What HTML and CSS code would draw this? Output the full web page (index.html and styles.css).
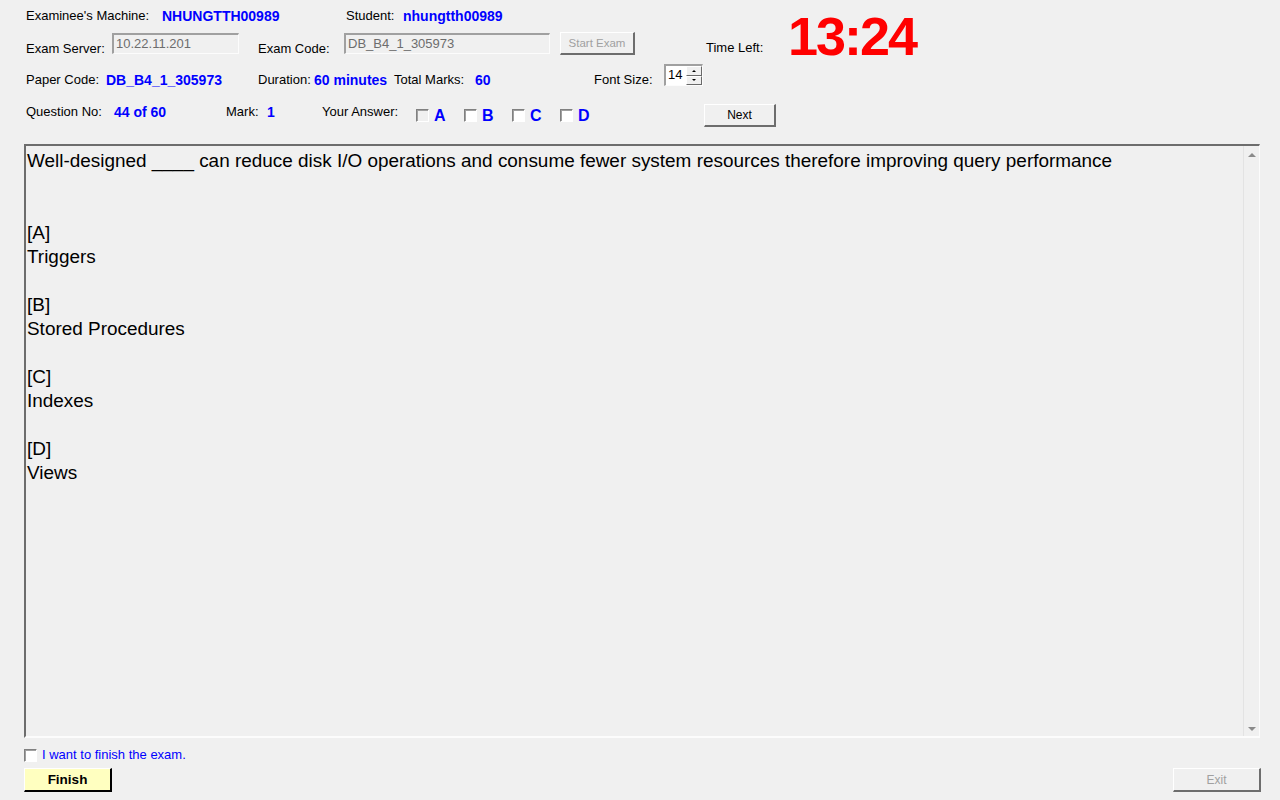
FILE: index.html
```html
<!DOCTYPE html>
<html>
<head>
<meta charset="utf-8">
<link rel="stylesheet" href="styles.css">
<title>Exam</title>
</head>
<body>
<div class="app">
  <div class="band">
    <div class="leftcol">
      <div class="row r1">
        <span class="lbl w136">Examinee's Machine:</span>
        <span class="val w184">NHUNGTTH00989</span>
        <span class="lbl w57">Student:</span>
        <span class="val">nhungtth00989</span>
      </div>
      <div class="row r2">
        <span class="lbl w86 low">Exam Server:</span>
        <span class="tbox w127">10.22.11.201</span>
        <span class="lbl w86 low ml19">Exam Code:</span>
        <span class="tbox w206">DB_B4_1_305973</span>
        <span class="btn btn-start">Start Exam</span>
      </div>
    </div>
    <span class="lbl timelbl">Time Left:</span>
    <span class="timer">13:24</span>
  </div>

  <div class="row r3">
    <span class="lbl w80 low">Paper Code:</span>
    <span class="val w152 low">DB_B4_1_305973</span>
    <span class="lbl w56 low">Duration:</span>
    <span class="val w80 low">60 minutes</span>
    <span class="lbl w81 low">Total Marks:</span>
    <span class="val w119 low">60</span>
    <span class="lbl w70 low">Font Size:</span>
    <span class="spin">
      <span class="spin-val">14</span>
      <span class="spin-btns">
        <span class="spin-b"><span class="tri-up sm"></span></span>
        <span class="spin-b"><span class="tri-down sm"></span></span>
      </span>
    </span>
  </div>

  <div class="row r4">
    <span class="lbl w88">Question No:</span>
    <span class="val w112">44 of 60</span>
    <span class="lbl w41">Mark:</span>
    <span class="val w55">1</span>
    <span class="lbl w94">Your Answer:</span>
    <span class="opt"><span class="cb cb-dis"></span><span class="optl">A</span></span>
    <span class="opt"><span class="cb"></span><span class="optl">B</span></span>
    <span class="opt"><span class="cb"></span><span class="optl">C</span></span>
    <span class="opt last"><span class="cb"></span><span class="optl">D</span></span>
    <span class="btn btn-next">Next</span>
  </div>

  <div class="qbox">
    <div class="qtext">
      <div>Well-designed ____ can reduce disk I/O operations and consume fewer system resources therefore improving query performance</div>
      <div>&nbsp;</div>
      <div>&nbsp;</div>
      <div>[A]</div>
      <div>Triggers</div>
      <div>&nbsp;</div>
      <div>[B]</div>
      <div>Stored Procedures</div>
      <div>&nbsp;</div>
      <div>[C]</div>
      <div>Indexes</div>
      <div>&nbsp;</div>
      <div>[D]</div>
      <div>Views</div>
    </div>
    <div class="vscroll">
      <span class="tri-up"></span>
      <span class="tri-down"></span>
    </div>
  </div>

  <div class="finish-row">
    <span class="cb"></span>
    <span class="finish-lbl">I want to finish the exam.</span>
  </div>
  <div class="footer">
    <span class="btn btn-finish">Finish</span>
    <span class="btn btn-exit">Exit</span>
  </div>
</div>
</body>
</html>
```

FILE: styles.css
```css
html, body {
  margin: 0;
  padding: 0;
  background: #f0f0f0;
}
body {
  font-family: "Liberation Sans", Arial, sans-serif;
  font-size: 13px;
  color: #000;
  width: 1280px;
  height: 800px;
  overflow: hidden;
}
.app {
  display: flex;
  flex-direction: column;
}
.band {
  display: flex;
  align-items: flex-start;
  padding-left: 26px;
  height: 64px;
}
.leftcol {
  width: 680px;
  display: flex;
  flex-direction: column;
}
.row {
  display: flex;
  white-space: nowrap;
}
.r1 {
  margin-top: 9px;
  height: 14px;
  line-height: 14px;
  align-items: center;
}
.r2 {
  margin-top: 10px;
  height: 22px;
  align-items: flex-end;
}
.lbl {
  line-height: 14px;
}
.val {
  color: #0000ff;
  font-weight: bold;
  font-size: 14px;
  line-height: 14px;
}
.low {
  margin-bottom: -1px;
}
.ml19 { margin-left: 19px; }
.w41 { width: 41px; }
.w55 { width: 55px; }
.w56 { width: 56px; }
.w57 { width: 57px; }
.w70 { width: 70px; }
.w80 { width: 80px; }
.w81 { width: 81px; }
.w86 { width: 86px; }
.w88 { width: 88px; }
.w94 { width: 94px; }
.w112 { width: 112px; }
.w119 { width: 119px; }
.w127 { width: 127px; }
.w136 { width: 136px; }
.w152 { width: 152px; }
.w184 { width: 184px; }
.w206 { width: 206px; }

.tbox {
  box-sizing: border-box;
  height: 21px;
  margin-bottom: 1px;
  border-top: 2px solid #a0a0a0;
  border-left: 2px solid #a0a0a0;
  border-right: 1px solid #fcfcfc;
  border-bottom: 1px solid #fcfcfc;
  background: #f0f0f0;
  color: #6d6d6d;
  padding: 1px 2px;
  line-height: 15px;
}
.btn {
  box-sizing: border-box;
  display: flex;
  align-items: center;
  justify-content: center;
  border-top: 1px solid #fff;
  border-left: 1px solid #fff;
  border-right: 2px solid #6d6d6d;
  border-bottom: 2px solid #6d6d6d;
  background: #f0f0f0;
  font-size: 12px;
}
.btn-start {
  margin-left: 10px;
  width: 75px;
  height: 23px;
  color: #a0a0a0;
  font-size: 11.5px;
}
.timelbl {
  margin-top: 41px;
  width: 82px;
}
.timer {
  margin-top: 9px;
  font-size: 54px;
  line-height: 54px;
  font-weight: bold;
  color: #ff0000;
  letter-spacing: -2px;
}

.r3 {
  padding-left: 26px;
  height: 22px;
  align-items: flex-end;
}
.spin {
  box-sizing: border-box;
  width: 39px;
  height: 22px;
  margin-bottom: 0;
  display: flex;
  border-top: 2px solid #a0a0a0;
  border-left: 2px solid #a0a0a0;
  border-right: 1px solid #fcfcfc;
  border-bottom: 1px solid #fcfcfc;
  background: #fff;
}
.spin-val {
  flex: 1;
  font-size: 13px;
  line-height: 18px;
  padding-left: 2px;
}
.spin-btns {
  display: flex;
  flex-direction: column;
  width: 16px;
}
.spin-b {
  flex: 1;
  display: flex;
  align-items: center;
  justify-content: center;
  background: #f0f0f0;
  border-top: 1px solid #fff;
  border-left: 1px solid #fff;
  border-right: 1px solid #696969;
  border-bottom: 1px solid #696969;
}

.r4 {
  padding-left: 26px;
  margin-top: 18px;
  height: 23px;
  align-items: center;
}
.r4 .lbl, .r4 .val {
  margin-top: -7px;
}
.opt {
  display: flex;
  align-items: center;
  width: 48px;
  margin-top: -1px;
}
.opt.last {
  width: 144px;
}
.cb {
  box-sizing: border-box;
  display: inline-block;
  width: 13px;
  height: 13px;
  border-top: 1px solid #808080;
  border-left: 1px solid #808080;
  border-right: 1px solid #fff;
  border-bottom: 1px solid #fff;
  box-shadow: inset 1px 1px 0 #a0a0a0;
  background: #fff;
}
.cb-dis {
  background: #f0f0f0;
}
.optl {
  margin-left: 5px;
  color: #0000ff;
  font-weight: bold;
  font-size: 16px;
  line-height: 18px;
  margin-top: 2px;
}
.btn-next {
  width: 72px;
  height: 23px;
}

.qbox {
  box-sizing: border-box;
  margin-top: 17px;
  margin-left: 24px;
  width: 1236px;
  height: 594px;
  display: flex;
  border-top: 2px solid #6d6d6d;
  border-left: 2px solid #6d6d6d;
  border-right: 1px solid #fcfcfc;
  border-bottom: 2px solid #fcfcfc;
}
.qtext {
  flex: 1;
  padding: 3px 1px;
  font-size: 18.93px;
  line-height: 24px;
  white-space: nowrap;
}
.vscroll {
  width: 15px;
  border-left: 1px solid #e3e3e3;
  display: flex;
  flex-direction: column;
  justify-content: space-between;
  align-items: center;
  padding: 7px 0 5px;
}
.tri-up {
  width: 0;
  height: 0;
  border-left: 4px solid transparent;
  border-right: 4px solid transparent;
  border-bottom: 4px solid #8a8a8a;
}
.tri-down {
  width: 0;
  height: 0;
  border-left: 4px solid transparent;
  border-right: 4px solid transparent;
  border-top: 4px solid #8a8a8a;
}
.tri-up.sm {
  border-left-width: 2px;
  border-right-width: 2px;
  border-bottom: 2px solid #000;
}
.tri-down.sm {
  border-left-width: 2px;
  border-right-width: 2px;
  border-top: 2px solid #000;
}

.finish-row {
  margin-top: 10px;
  padding-left: 24px;
  display: flex;
  align-items: center;
  height: 14px;
}
.finish-lbl {
  margin-left: 5px;
  color: #0000ff;
  line-height: 14px;
}
.footer {
  margin-top: 6px;
  padding-left: 24px;
  padding-right: 19px;
  display: flex;
  justify-content: space-between;
}
.btn-finish {
  width: 88px;
  height: 24px;
  background: #ffffc0;
  border-right: 2px solid #000;
  border-bottom: 2px solid #000;
  font-weight: bold;
  font-size: 13.5px;
}
.btn-exit {
  width: 88px;
  height: 24px;
  color: #a0a0a0;
}
```
